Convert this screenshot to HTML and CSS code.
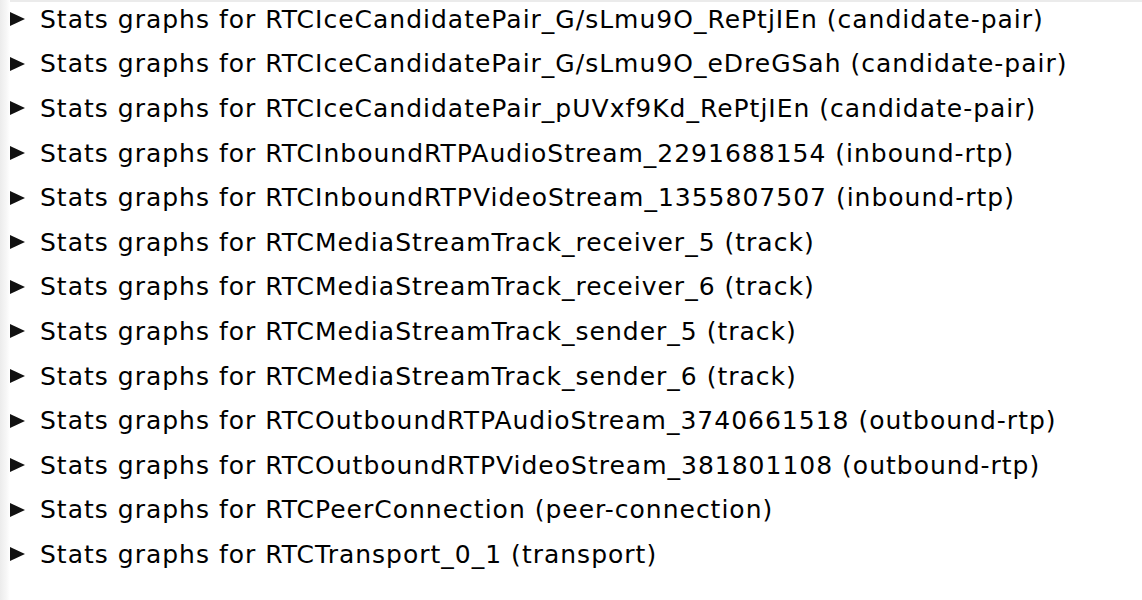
FILE: index.html
```html
<!DOCTYPE html>
<html lang="en">
<head>
    <meta charset="UTF-8">
    <title>Stats graphs</title>
    <link rel="stylesheet" href="styles.css">
</head>
<body>
    <div class="page">
        <div class="top-edge"></div>
        <div class="stats-list">
            <details><summary>Stats graphs for RTCIceCandidatePair_G/sLmu9O_RePtjIEn (candidate-pair)</summary></details>
            <details><summary>Stats graphs for RTCIceCandidatePair_G/sLmu9O_eDreGSah (candidate-pair)</summary></details>
            <details><summary>Stats graphs for RTCIceCandidatePair_pUVxf9Kd_RePtjIEn (candidate-pair)</summary></details>
            <details><summary>Stats graphs for RTCInboundRTPAudioStream_2291688154 (inbound-rtp)</summary></details>
            <details><summary>Stats graphs for RTCInboundRTPVideoStream_1355807507 (inbound-rtp)</summary></details>
            <details><summary>Stats graphs for RTCMediaStreamTrack_receiver_5 (track)</summary></details>
            <details><summary>Stats graphs for RTCMediaStreamTrack_receiver_6 (track)</summary></details>
            <details><summary>Stats graphs for RTCMediaStreamTrack_sender_5 (track)</summary></details>
            <details><summary>Stats graphs for RTCMediaStreamTrack_sender_6 (track)</summary></details>
            <details><summary>Stats graphs for RTCOutboundRTPAudioStream_3740661518 (outbound-rtp)</summary></details>
            <details><summary>Stats graphs for RTCOutboundRTPVideoStream_381801108 (outbound-rtp)</summary></details>
            <details><summary>Stats graphs for RTCPeerConnection (peer-connection)</summary></details>
            <details><summary>Stats graphs for RTCTransport_0_1 (transport)</summary></details>
        </div>
    </div>
</body>
</html>
```

FILE: styles.css
```css
body {
    margin: 0;
    background: #fff;
    font-family: 'DejaVu Sans', 'Lucida Grande', sans-serif;
    color: #000;
    overflow: hidden;
}

.page {
    height: 600px;
    padding-left: 10px;
    background: linear-gradient(to right, #ececec 0, #f6f6f6 6px, #fff 10px);
}

.top-edge {
    height: 2px;
    background: #ebebeb;
}

.stats-list {
    margin-top: -5px; /* list is scrolled a little */
}

summary {
    display: flex;
    align-items: center;
    gap: 15px;
    height: 44.6px;
    font-size: 25px;
    letter-spacing: 1px;
    list-style: none;
    cursor: pointer;
    white-space: nowrap;
}

summary::-webkit-details-marker {
    display: none;
}

summary::before {
    content: "";
    border-left: 15px solid #111;
    border-top: 7.5px solid transparent;
    border-bottom: 7.5px solid transparent;
}
```
